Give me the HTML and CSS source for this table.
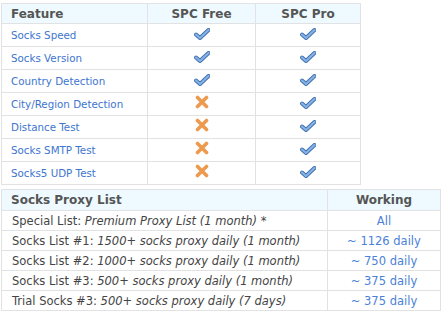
FILE: index.html
```html
<!DOCTYPE html>
<html lang="en">
<head>
  <meta charset="UTF-8" />
  <title>Socks Proxy Checker</title>
  <link rel="stylesheet" href="styles.css">
</head>
<body>
  <svg width="0" height="0" style="position:absolute">
    <defs>
      <symbol id="yes" viewBox="0 0 16 12">
        <path d="M2 6.5 L6 10 L14.5 2" fill="none" stroke="#3f6fae" stroke-width="4" stroke-linecap="round" stroke-linejoin="round"/>
        <path d="M2 6.5 L6 10 L14.5 2" fill="none" stroke="#86b2e6" stroke-width="2.2" stroke-linecap="round" stroke-linejoin="round"/>
      </symbol>
      <symbol id="no" viewBox="0 0 14 14">
        <path d="M2.5 2.5 L11.5 11.5 M11.5 2.5 L2.5 11.5" fill="none" stroke="#ee9a4e" stroke-width="3.6" stroke-linecap="round"/>
      </symbol>
    </defs>
  </svg>

  <table class="grid features">
    <tr>
      <th class="feat">Feature</th>
      <th>SPC Free</th>
      <th>SPC Pro</th>
    </tr>
    <tr><td class="name">Socks Speed</td><td><svg class="ok"><use href="#yes"/></svg></td><td><svg class="ok"><use href="#yes"/></svg></td></tr>
    <tr><td class="name">Socks Version</td><td><svg class="ok"><use href="#yes"/></svg></td><td><svg class="ok"><use href="#yes"/></svg></td></tr>
    <tr><td class="name">Country Detection</td><td><svg class="ok"><use href="#yes"/></svg></td><td><svg class="ok"><use href="#yes"/></svg></td></tr>
    <tr><td class="name">City/Region Detection</td><td><svg class="nope"><use href="#no"/></svg></td><td><svg class="ok"><use href="#yes"/></svg></td></tr>
    <tr><td class="name">Distance Test</td><td><svg class="nope"><use href="#no"/></svg></td><td><svg class="ok"><use href="#yes"/></svg></td></tr>
    <tr><td class="name">Socks SMTP Test</td><td><svg class="nope"><use href="#no"/></svg></td><td><svg class="ok"><use href="#yes"/></svg></td></tr>
    <tr><td class="name">Socks5 UDP Test</td><td><svg class="nope"><use href="#no"/></svg></td><td><svg class="ok"><use href="#yes"/></svg></td></tr>
  </table>

  <table class="grid lists">
    <tr>
      <th class="feat">Socks Proxy List</th>
      <th>Working</th>
    </tr>
    <tr><td class="plan">Special List: <em>Premium Proxy List (1 month) *</em></td><td class="count">All</td></tr>
    <tr><td class="plan">Socks List #1: <em>1500+ socks proxy daily (1 month)</em></td><td class="count">~ 1126 daily</td></tr>
    <tr><td class="plan">Socks List #2: <em>1000+ socks proxy daily (1 month)</em></td><td class="count">~ 750 daily</td></tr>
    <tr><td class="plan">Socks List #3: <em>500+ socks proxy daily (1 month)</em></td><td class="count">~ 375 daily</td></tr>
    <tr><td class="plan">Trial Socks #3: <em>500+ socks proxy daily (7 days)</em></td><td class="count">~ 375 daily</td></tr>
  </table>
</body>
</html>
```

FILE: styles.css
```css
body {
  margin: 0;
  padding: 3px 0 0 1px;
  background: #fff;
  font-family: "DejaVu Sans", Verdana, sans-serif;
  color: #333;
}

.grid {
  border-collapse: collapse;
  border: 1px solid #dedede;
  table-layout: fixed;
}

.grid th,
.grid td {
  border: 1px solid #e2e2e2;
  padding: 0;
  text-align: center;
  white-space: nowrap;
}

.grid th {
  background: #eefaff;
  color: #555;
  font-weight: bold;
  font-size: 12px;
}

.grid th.feat {
  text-align: left;
  padding-left: 9px;
}

/* Feature comparison */
.features {
  width: 360px;
}

.features th {
  height: 19px;
}

.features th:nth-child(1) { width: 136px; }
.features th:nth-child(2) { width: 107px; }

.features td {
  height: 22px;
}

.features td.name {
  text-align: left;
  padding-left: 9px;
  font-size: 10.3px;
  color: #3d75cf;
}

.ok {
  width: 16px;
  height: 12px;
  display: block;
  margin: -3px auto 0;
}

.nope {
  width: 14px;
  height: 14px;
  display: block;
  margin: -4px auto 0;
}

/* Proxy lists */
.lists {
  width: 440px;
  margin-top: 4px;
}

.lists th {
  height: 20px;
}

.lists th:nth-child(1) { width: 316px; }

.lists td {
  height: 19px;
  font-size: 11.5px;
}

.lists td.plan {
  text-align: left;
  padding-left: 10px;
  color: #444;
}

.lists td.count {
  color: #4a82d8;
}
```
